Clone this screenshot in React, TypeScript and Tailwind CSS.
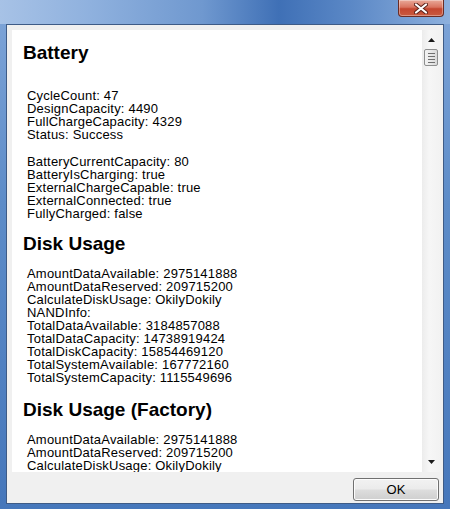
import React from "react";

type Group = string[];

type Section = {
  title: string;
  groups: Group[];
};

const sections: Section[] = [
  {
    title: "Battery",
    groups: [
      [
        "CycleCount: 47",
        "DesignCapacity: 4490",
        "FullChargeCapacity: 4329",
        "Status: Success",
      ],
      [
        "BatteryCurrentCapacity: 80",
        "BatteryIsCharging: true",
        "ExternalChargeCapable: true",
        "ExternalConnected: true",
        "FullyCharged: false",
      ],
    ],
  },
  {
    title: "Disk Usage",
    groups: [
      [
        "AmountDataAvailable: 2975141888",
        "AmountDataReserved: 209715200",
        "CalculateDiskUsage: OkilyDokily",
        "NANDInfo:",
        "TotalDataAvailable: 3184857088",
        "TotalDataCapacity: 14738919424",
        "TotalDiskCapacity: 15854469120",
        "TotalSystemAvailable: 167772160",
        "TotalSystemCapacity: 1115549696",
      ],
    ],
  },
  {
    title: "Disk Usage (Factory)",
    groups: [
      [
        "AmountDataAvailable: 2975141888",
        "AmountDataReserved: 209715200",
        "CalculateDiskUsage: OkilyDokily",
      ],
    ],
  },
];

// spacing taken from the screenshot, per section
const headingMargins = ["mt-[12px]", "mt-[13px]", "mt-[15px]"];
const bodyMargins = ["mt-[25px]", "mt-[12px]", "mt-[12px]"];

function CloseButton() {
  return (
    <div className="flex h-[17px] w-[46px] items-center justify-center rounded-b-[4px] border border-t-0 border-[#6b2c24] bg-[linear-gradient(180deg,#e9a999_0%,#d9735f_45%,#c4462f_55%,#c95a3f_100%)] shadow-[inset_0_0_0_1px_rgba(255,255,255,0.35)]">
      <svg width="14" height="11" viewBox="0 0 14 11">
        <path
          d="M2 1.5 L12 9.5 M12 1.5 L2 9.5"
          stroke="#5a2018"
          strokeWidth="4"
          strokeLinecap="round"
        />
        <path
          d="M2 1.5 L12 9.5 M12 1.5 L2 9.5"
          stroke="#ffffff"
          strokeWidth="2.2"
          strokeLinecap="round"
        />
      </svg>
    </div>
  );
}

function ScrollBar() {
  return (
    <div className="flex w-[18px] flex-col items-center bg-[linear-gradient(90deg,#ececec_0%,#f6f6f6_40%,#f2f2f2_100%)]">
      <svg className="mt-[8px]" width="7" height="4" viewBox="0 0 7 4">
        <path d="M3.5 0 L7 4 L0 4 Z" fill="#1a1a1a" />
      </svg>
      <div className="mt-[7px] flex h-[17px] w-[14px] flex-col items-center justify-center gap-[2px] rounded-[2px] border border-[#8e8f8f] bg-[linear-gradient(90deg,#f3f3f3_0%,#e8e8e8_50%,#d9d9d9_100%)]">
        <div className="h-px w-[7px] bg-[#6f6f6f]" />
        <div className="h-px w-[7px] bg-[#6f6f6f]" />
        <div className="h-px w-[7px] bg-[#6f6f6f]" />
        <div className="h-px w-[7px] bg-[#6f6f6f]" />
      </div>
      <div className="flex-1" />
      <svg className="mb-[8px]" width="7" height="4" viewBox="0 0 7 4">
        <path d="M0 0 L7 0 L3.5 4 Z" fill="#1a1a1a" />
      </svg>
    </div>
  );
}

export default function App() {
  return (
    <div className="flex h-[509px] w-[450px] flex-col overflow-hidden bg-[linear-gradient(180deg,#7fa5d8_0%,#5d8cc8_40%,#4677bb_100%)] font-['Liberation_Sans',Arial,sans-serif]">
      {/* title bar */}
      <div className="flex h-[24px] shrink-0 justify-end bg-[linear-gradient(90deg,#a7c2e6_0%,#8fb1de_20%,#6f98cf_45%,#3f70b6_62%,#5b88c6_78%,#8db0dd_100%)] pr-[6px]">
        <CloseButton />
      </div>

      <div className="flex min-h-0 flex-1">
        <div className="w-[6px] shrink-0" />

        <div className="flex min-w-0 flex-1 flex-col border border-[#3e5b86] bg-[#f0f0f0]">
          <div className="flex min-h-0 flex-1 pl-[5px] pr-[3px] pt-[5px]">
            <div className="flex min-w-0 flex-1 bg-white">
              <div className="min-w-0 flex-1 overflow-hidden pl-[11px] text-black">
                {sections.map((section, i) => (
                  <div key={section.title}>
                    <h2
                      className={`${headingMargins[i]} h-[22px] text-[19px] font-bold leading-[22px]`}
                    >
                      {section.title}
                    </h2>
                    {section.groups.map((group, j) => (
                      <div
                        key={j}
                        className={`${j === 0 ? bodyMargins[i] : "mt-[14px]"} pl-[4px] text-[13px] leading-[13px] tracking-[0.2px] whitespace-nowrap`}
                      >
                        {group.map((line, k) => (
                          <div key={k}>{line}</div>
                        ))}
                      </div>
                    ))}
                  </div>
                ))}
              </div>
              <ScrollBar />
            </div>
          </div>

          <div className="flex h-[31px] shrink-0 items-start justify-end pr-[4px] pt-[6px]">
            <button className="h-[23px] w-[86px] rounded-[3px] border border-[#707070] bg-[linear-gradient(180deg,#f2f2f2_0%,#ebebeb_48%,#dddddd_52%,#cfcfcf_100%)] text-[13px] text-black shadow-[inset_0_0_0_1px_#fcfcfc]">
              OK
            </button>
          </div>
        </div>

        <div className="w-[6px] shrink-0" />
      </div>

      <div className="h-[5px] shrink-0" />
    </div>
  );
}
